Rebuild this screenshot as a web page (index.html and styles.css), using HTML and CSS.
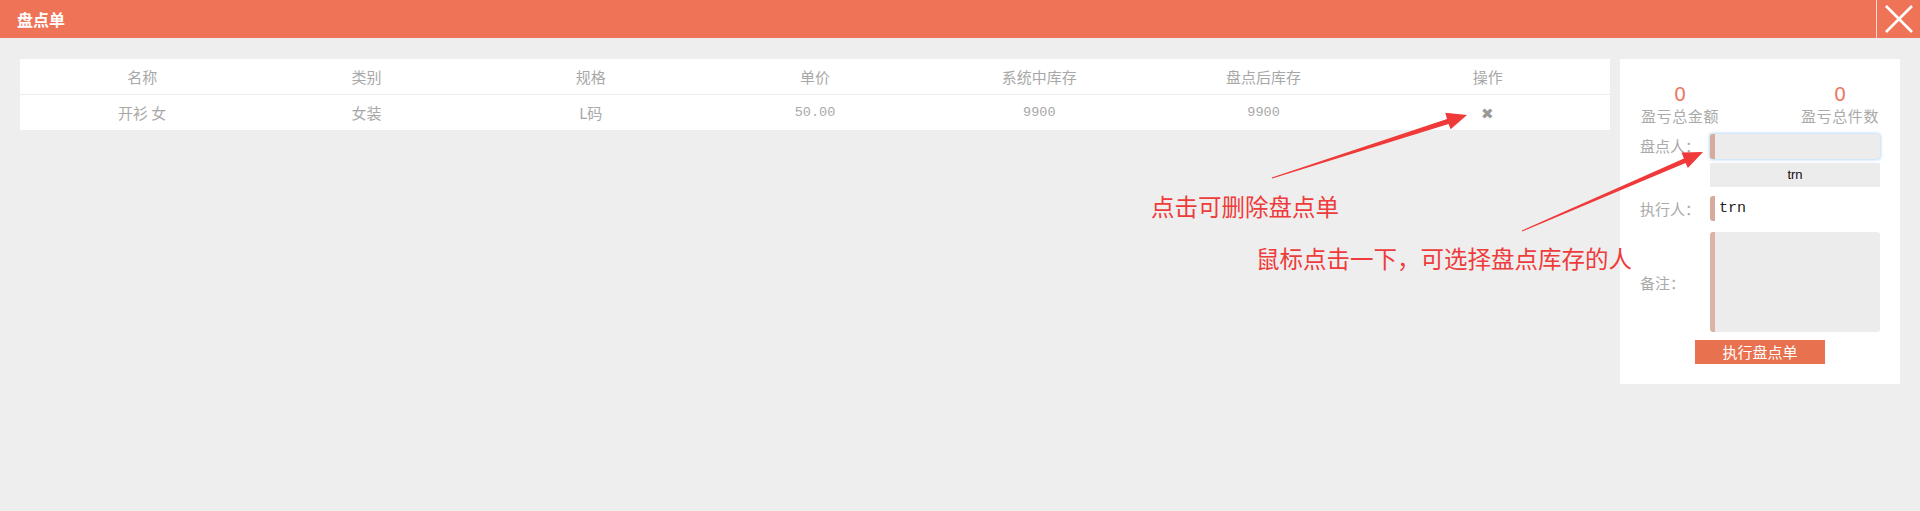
FILE: index.html
```html
<!DOCTYPE html>
<html lang="zh-CN">
<head>
<meta charset="utf-8">
<title>盘点单</title>
<link rel="stylesheet" href="styles.css">
</head>
<body>
<header class="topbar">
  <div class="title">盘点单</div>
  <button class="close" aria-label="关闭">
    <svg width="28" height="28" viewBox="0 0 28 28"><path d="M1 1 L27 27 M27 1 L1 27" stroke="#fff" stroke-width="2.6" fill="none"/></svg>
  </button>
</header>
<main class="content">
  <section class="table-card">
    <div class="trow thead">
      <div>名称</div><div>类别</div><div>规格</div><div>单价</div><div>系统中库存</div><div>盘点后库存</div><div>操作</div>
    </div>
    <div class="trow tbody">
      <div>开衫 女</div><div>女装</div><div>L码</div><div class="num">50.00</div><div class="num">9900</div><div class="num">9900</div><div class="del">✖</div>
    </div>
  </section>
  <aside class="panel">
    <div class="stats">
      <div class="stat"><div class="stat-num">0</div><div class="stat-label">盈亏总金额</div></div>
      <div class="stat"><div class="stat-num">0</div><div class="stat-label">盈亏总件数</div></div>
    </div>
    <div class="field f-checker">
      <label class="lbl">盘点人：</label>
      <div class="input focus"></div>
    </div>
    <div class="dropdown">trn</div>
    <div class="field f-exec">
      <label class="lbl">执行人：</label>
      <div class="input plain">trn</div>
    </div>
    <div class="field f-note">
      <label class="lbl">备注：</label>
      <div class="textarea"></div>
    </div>
    <div class="btn-row"><button class="btn">执行盘点单</button></div>
  </aside>
</main>
<div class="note note1">点击可删除盘点单</div>
<div class="note note2">鼠标点击一下，可选择盘点库存的人</div>
<svg class="arrows" width="1920" height="511" viewBox="0 0 1920 511">
  <polygon fill="#f03a3a" points="1272.2,178.5 1448.6,124.0 1450.6,129.3 1467,115 1445.3,112.8 1447.0,118.9 1271.8,177.5"/>
  <polygon fill="#f03a3a" points="1522.2,231.5 1685.5,163.0 1687.9,168.0 1703,152 1681.5,152.6 1683.9,158.4 1521.8,230.5"/>
</svg>
</body>
</html>
```
FILE: styles.css
```css
* { box-sizing: border-box; }
html, body { margin: 0; padding: 0; }
body {
  width: 1920px;
  height: 511px;
  background: #eeeeee;
  font-family: "Noto Sans CJK SC", "Noto Sans", sans-serif;
  position: relative;
  overflow: hidden;
}
.topbar {
  height: 38px;
  background: #ef7457;
  display: flex;
  align-items: center;
  justify-content: space-between;
}
.title {
  color: #fff;
  font-weight: bold;
  font-size: 16px;
  padding-left: 17px;
  line-height: 38px;
}
.close {
  width: 44px;
  height: 38px;
  border: 0;
  border-left: 1px solid rgba(255,255,255,0.75);
  background: transparent;
  padding: 0;
  display: flex;
  align-items: center;
  justify-content: center;
}
.content {
  display: flex;
  align-items: flex-start;
  padding: 21px 20px 0 20px;
  gap: 10px;
}
.table-card {
  width: 1590px;
  background: #fff;
}
.trow {
  display: grid;
  grid-template-columns: repeat(7, 1fr);
  height: 35px;
  padding: 0 10px;
  align-items: center;
  text-align: center;
  color: #a8a8a8;
  font-size: 15px;
}
.thead { border-bottom: 1px solid #ececec; height: 36px; }
.num { font-family: "Liberation Mono", monospace; font-size: 13.5px; color: #a8a8a8; }
.del { color: #999; font-size: 15px; }
.panel {
  width: 280px;
  height: 325px;
  background: #fff;
  padding: 24px 20px 0 20px;
}
.stats {
  display: flex;
  justify-content: space-between;
  padding: 0 1px;
}
.stat { text-align: center; }
.stat-num {
  color: #e8735a;
  font-family: "Liberation Sans", Arial, sans-serif;
  font-size: 20px;
  line-height: 22px;
}
.stat-label {
  color: #a9a9a9;
  font-size: 15px;
  line-height: 22px;
  letter-spacing: 0.6px;
}
.field {
  display: flex;
  align-items: center;
}
.lbl {
  width: 70px;
  color: #aaa;
  font-size: 15px;
}
.f-checker { margin-top: 6px; }
.f-checker .lbl { align-self: flex-start; line-height: 26px; }
.input {
  width: 170px;
  height: 25px;
  border-left: 5px solid #d6ab9d;
  border-radius: 3px;
}
.input.focus {
  background: #ececec;
  box-shadow: 0 0 3px 1px #bcdcf5;
}
.input.plain {
  background: #fff;
  font-family: "Liberation Mono", monospace;
  font-size: 15px;
  color: #222;
  line-height: 25px;
  padding-left: 4px;
}
.dropdown {
  margin: 4px 0 0 70px;
  width: 170px;
  height: 24px;
  background: #ececec;
  color: #111;
  font-family: "Liberation Sans", Arial, sans-serif;
  font-size: 13px;
  line-height: 24px;
  text-align: center;
}
.f-exec { margin-top: 9px; }
.f-note { margin-top: 11px; }
.textarea {
  width: 170px;
  height: 100px;
  background: #ececec;
  border-left: 5px solid #dcb4a7;
  border-radius: 3px;
}
.btn-row {
  display: flex;
  justify-content: center;
  margin-top: 8px;
}
.btn {
  width: 130px;
  height: 24px;
  border: 0;
  padding: 0;
  background: #e8714f;
  color: #fff;
  font-family: "Noto Sans CJK SC", sans-serif;
  font-size: 15px;
  line-height: 24px;
}
.note {
  position: absolute;
  color: #ee3b3b;
  font-size: 23.5px;
  line-height: 30px;
  white-space: nowrap;
}
.note1 { left: 1151px; top: 191px; }
.note2 { left: 1256px; top: 243px; }
.arrows {
  position: absolute;
  left: 0;
  top: 0;
  pointer-events: none;
}
```
